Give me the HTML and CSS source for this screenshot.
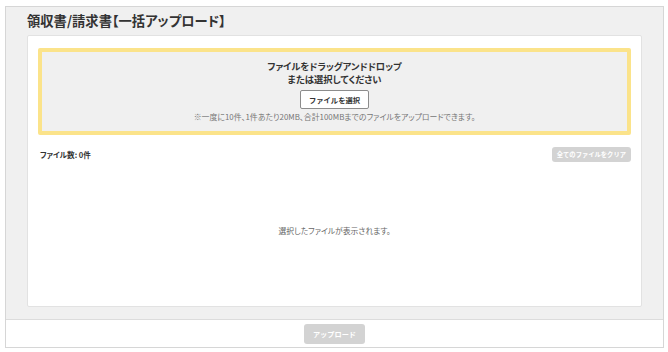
FILE: index.html
```html
<!DOCTYPE html>
<html lang="ja">
<head>
    <meta charset="UTF-8">
    <meta name="viewport" content="width=device-width, initial-scale=1.0">
    <title>領収書/請求書【一括アップロード】</title>
    <link rel="stylesheet" href="styles.css">
</head>
<body>
    <div class="page">
        <div class="page-body">
            <h1 class="title">領収書/請求書【一括アップロード】</h1>
            <div class="card">
                <div class="dropzone">
                    <p class="drop-text">ファイルをドラッグアンドドロップ<br>または選択してください</p>
                    <button class="btn-select">ファイルを選択</button>
                    <p class="drop-note">※一度に10件、1件あたり20MB、合計100MBまでのファイルをアップロードできます。</p>
                </div>
                <div class="file-head">
                    <span class="file-count">ファイル数: 0件</span>
                    <button class="btn-clear" disabled>全てのファイルをクリア</button>
                </div>
                <div class="file-empty">選択したファイルが表示されます。</div>
            </div>
        </div>
        <div class="page-footer">
            <button class="btn-upload" disabled>アップロード</button>
        </div>
    </div>
</body>
</html>
```

FILE: styles.css
```css
body { margin: 0; background-color: #fff; color: #333; font-family: "Noto Sans CJK JP", "Noto Sans", sans-serif; font-feature-settings: "palt"; }
.page { margin: 6px 4px 4px 5px; border: 1px solid #d6d6d6; background-color: #f0f0f0; }
.page-body { padding: 3px 21px 12px 21px; }
.title { margin: 0 0 4px; font-size: 13.3px; line-height: 21px; font-weight: bold; color: #333; }
.card { display: flex; flex-direction: column; height: 272px; box-sizing: border-box; background-color: #fff; border: 1px solid #e2e2e2; border-radius: 2px; padding: 12px 10px 0; }
.dropzone { display: flex; flex-direction: column; align-items: center; background-color: #f0f0f0; border: 4px solid #fbe38a; border-radius: 2px; padding: 8px 10px; text-align: center; }
.drop-text { margin: 0; font-size: 9.3px; line-height: 13px; font-weight: bold; color: #333; }
.btn-select { margin-top: 4px; height: 19px; padding: 0 8px; background-color: #fff; border: 1px solid #8c8c8c; border-radius: 2px; font-family: inherit; font-size: 7.3px; font-weight: bold; color: #333; cursor: pointer; }
.drop-note { margin: 2px 0 0; font-size: 7.9px; line-height: 12px; color: #777; }
.file-head { display: flex; justify-content: space-between; align-items: center; margin-top: 12px; padding-left: 2px; }
.file-count { font-size: 7.6px; font-weight: bold; color: #333; }
.btn-clear { height: 15px; padding: 0 5px; background-color: #d3d3d3; border: none; border-radius: 3px; font-family: inherit; font-size: 6.3px; font-weight: bold; color: #fff; }
.file-empty { flex-grow: 1; display: flex; align-items: center; justify-content: center; padding-bottom: 8px; font-size: 7.8px; color: #666; }
.page-footer { display: flex; justify-content: center; border-top: 1px solid #dcdcdc; background-color: #fff; padding: 4px 0 3px; }
.btn-upload { height: 20px; padding: 0 9px; background-color: #d3d3d3; border: none; border-radius: 3px; font-family: inherit; font-size: 7.2px; font-weight: bold; color: #fff; }
```
